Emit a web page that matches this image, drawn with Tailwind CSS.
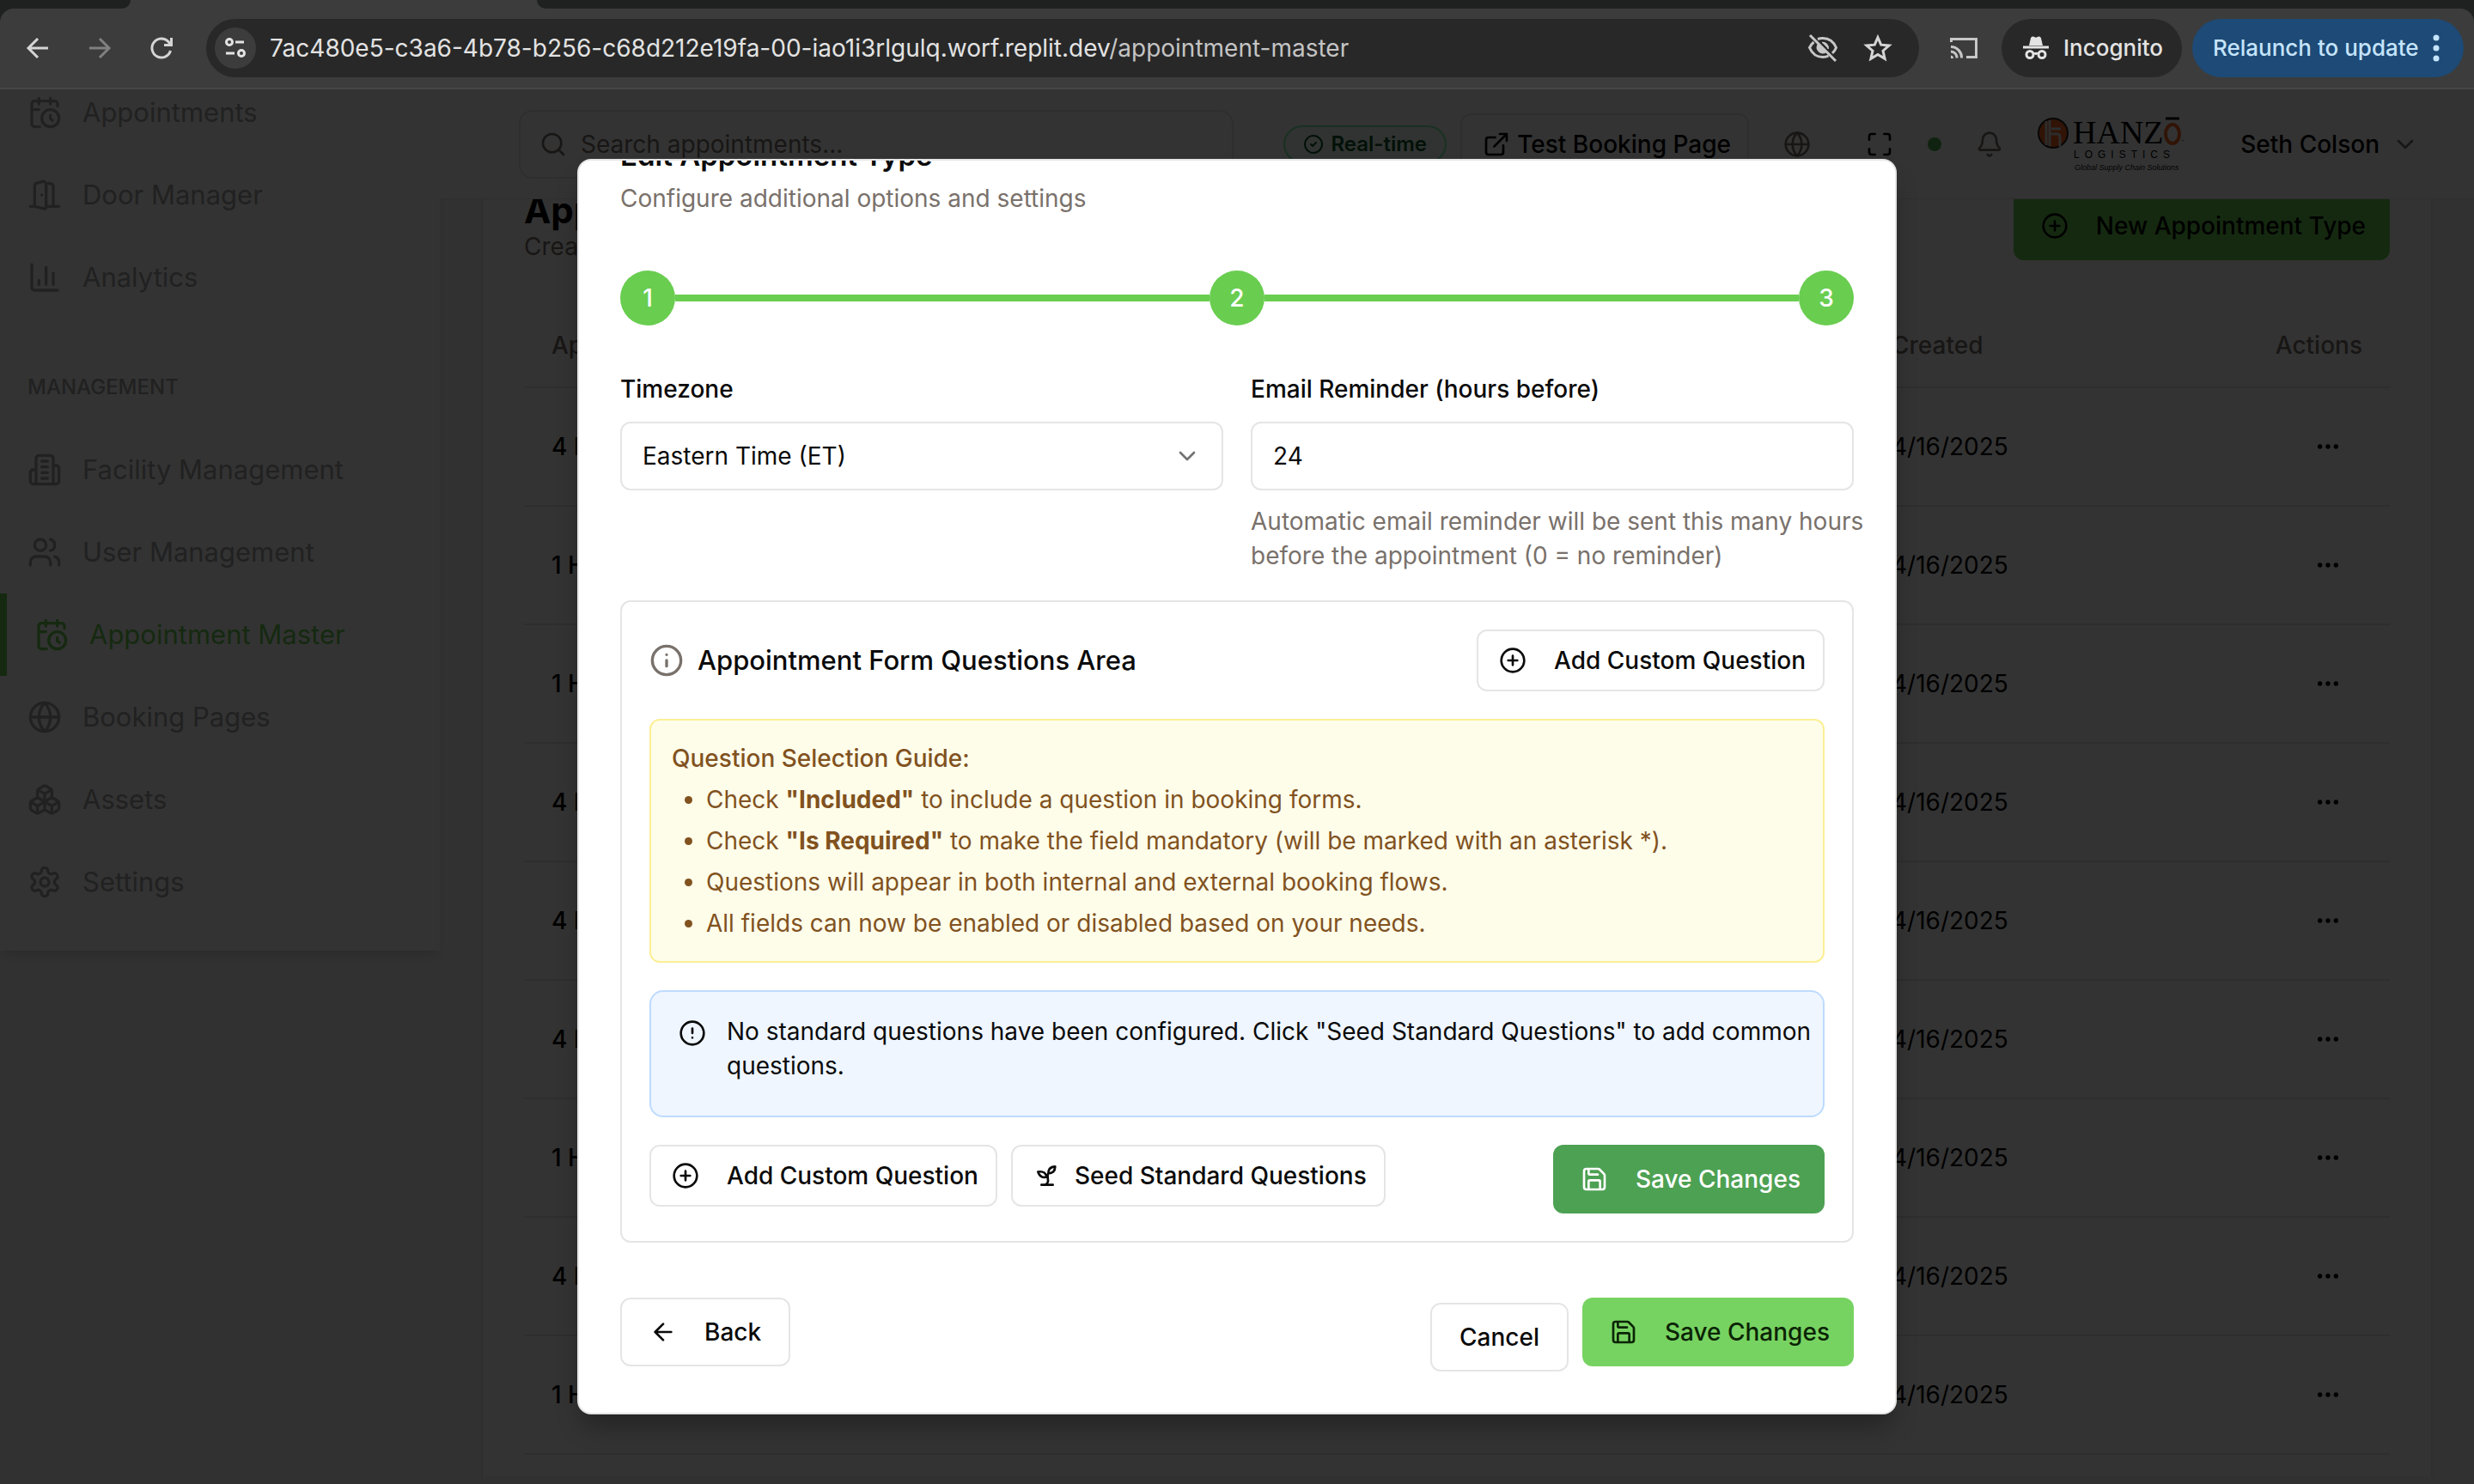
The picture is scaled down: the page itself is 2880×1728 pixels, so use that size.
<!DOCTYPE html>
<html lang="en">
<head>
<meta charset="utf-8">
<title>Appointment Master</title>
<script src="https://cdn.jsdelivr.net/npm/@tailwindcss/browser@4"></script>
</head>
<body class="flex h-screen flex-col overflow-hidden bg-[#1f2120] font-['Inter',sans-serif] text-[28px] leading-10 text-neutral-950">

<svg class="hidden" xmlns="http://www.w3.org/2000/svg">
  <symbol id="i-calclock" viewBox="0 0 24 24"><path d="M21 7.5V6a2 2 0 0 0-2-2H5a2 2 0 0 0-2 2v14a2 2 0 0 0 2 2h3.5M16 2v4M8 2v4M3 10h5M17.5 17.5 16 16.3V14"/><circle cx="16" cy="16" r="6"/></symbol>
  <symbol id="i-door" viewBox="0 0 24 24"><path d="M13 4h3a2 2 0 0 1 2 2v14M2 20h3M13 20h9M10 12v.01M13 4.562v16.157a1 1 0 0 1-1.242.97L5 20V5.562a2 2 0 0 1 1.515-1.94l4-1A2 2 0 0 1 13 4.561Z"/></symbol>
  <symbol id="i-chart" viewBox="0 0 24 24"><path d="M3 3v16a2 2 0 0 0 2 2h16M18 17V9M13 17V5M8 17v-3"/></symbol>
  <symbol id="i-building" viewBox="0 0 24 24"><path d="M6 22V4a2 2 0 0 1 2-2h8a2 2 0 0 1 2 2v18ZM6 12H4a2 2 0 0 0-2 2v6a2 2 0 0 0 2 2h2M18 9h2a2 2 0 0 1 2 2v9a2 2 0 0 1-2 2h-2M10 6h4M10 10h4M10 14h4M10 18h4"/></symbol>
  <symbol id="i-users" viewBox="0 0 24 24"><path d="M16 21v-2a4 4 0 0 0-4-4H6a4 4 0 0 0-4 4v2M22 21v-2a4 4 0 0 0-3-3.87M16 3.13a4 4 0 0 1 0 7.75"/><circle cx="9" cy="7" r="4"/></symbol>
  <symbol id="i-globe" viewBox="0 0 24 24"><circle cx="12" cy="12" r="10"/><path d="M12 2a14.5 14.5 0 0 0 0 20 14.5 14.5 0 0 0 0-20M2 12h20"/></symbol>
  <symbol id="i-boxes" viewBox="0 0 24 24"><path d="M2.97 12.92A2 2 0 0 0 2 14.63v3.24a2 2 0 0 0 .97 1.71l3 1.8a2 2 0 0 0 2.06 0L12 19v-5.5l-5-3-4.03 2.42ZM7 16.5l-4.74-2.85M7 16.5l5-3M7 16.5v5.17M12 13.5V19l3.97 2.38a2 2 0 0 0 2.06 0l3-1.8a2 2 0 0 0 .97-1.71v-3.24a2 2 0 0 0-.97-1.71L17 10.5l-5 3ZM17 16.5l-5-3M17 16.5l4.74-2.85M17 16.5v5.17M7.97 4.42A2 2 0 0 0 7 6.13v4.37l5 3 5-3V6.13a2 2 0 0 0-.97-1.71l-3-1.8a2 2 0 0 0-2.06 0l-3 1.8ZM12 8 7.26 5.15M12 8l4.74-2.85M12 13.5V8"/></symbol>
  <symbol id="i-gear" viewBox="0 0 24 24"><path d="M12.22 2h-.44a2 2 0 0 0-2 2v.18a2 2 0 0 1-1 1.73l-.43.25a2 2 0 0 1-2 0l-.15-.08a2 2 0 0 0-2.73.73l-.22.38a2 2 0 0 0 .73 2.73l.15.1a2 2 0 0 1 1 1.72v.51a2 2 0 0 1-1 1.74l-.15.09a2 2 0 0 0-.73 2.73l.22.38a2 2 0 0 0 2.73.73l.15-.08a2 2 0 0 1 2 0l.43.25a2 2 0 0 1 1 1.73V20a2 2 0 0 0 2 2h.44a2 2 0 0 0 2-2v-.18a2 2 0 0 1 1-1.73l.43-.25a2 2 0 0 1 2 0l.15.08a2 2 0 0 0 2.73-.73l.22-.39a2 2 0 0 0-.73-2.73l-.15-.08a2 2 0 0 1-1-1.74v-.5a2 2 0 0 1 1-1.74l.15-.09a2 2 0 0 0 .73-2.73l-.22-.38a2 2 0 0 0-2.73-.73l-.15.08a2 2 0 0 1-2 0l-.43-.25a2 2 0 0 1-1-1.73V4a2 2 0 0 0-2-2z"/><circle cx="12" cy="12" r="3"/></symbol>
  <symbol id="i-search" viewBox="0 0 24 24"><circle cx="11" cy="11" r="8"/><path d="m21 21-4.3-4.3"/></symbol>
  <symbol id="i-check" viewBox="0 0 24 24"><circle cx="12" cy="12" r="10"/><path d="m9 12 2 2 4-4"/></symbol>
  <symbol id="i-external" viewBox="0 0 24 24"><path d="M15 3h6v6M10 14 21 3M18 13v6a2 2 0 0 1-2 2H5a2 2 0 0 1-2-2V8a2 2 0 0 1 2-2h6"/></symbol>
  <symbol id="i-scan" viewBox="0 0 24 24"><path d="M8 3H5a2 2 0 0 0-2 2v3M21 8V5a2 2 0 0 0-2-2h-3M3 16v3a2 2 0 0 0 2 2h3M16 21h3a2 2 0 0 0 2-2v-3"/></symbol>
  <symbol id="i-bell" viewBox="0 0 24 24"><path d="M10.268 21a2 2 0 0 0 3.464 0M3.262 15.326A1 1 0 0 0 4 17h16a1 1 0 0 0 .74-1.673C19.41 13.956 18 12.499 18 8A6 6 0 0 0 6 8c0 4.499-1.411 5.956-2.738 7.326"/></symbol>
  <symbol id="i-down" viewBox="0 0 24 24"><path d="m6 9 6 6 6-6"/></symbol>
  <symbol id="i-plus" viewBox="0 0 24 24"><circle cx="12" cy="12" r="10"/><path d="M8 12h8M12 8v8"/></symbol>
  <symbol id="i-info" viewBox="0 0 24 24"><circle cx="12" cy="12" r="10"/><path d="M12 16v-4M12 8h.01"/></symbol>
  <symbol id="i-alert" viewBox="0 0 24 24"><circle cx="12" cy="12" r="10"/><path d="M12 8v4M12 16h.01"/></symbol>
  <symbol id="i-sprout" viewBox="0 0 24 24"><path d="M7 20h10M10 20c5.5-2.5.8-6.4 3-10M9.5 9.4c1.1.8 1.8 2.2 2.3 3.7-2 .4-3.5.4-4.8-.3-1.2-.6-2.3-1.9-3-4.2 2.8-.5 4.4 0 5.5.8zM14.1 6a7 7 0 0 0-1.1 4c1.9-.1 3.3-.6 4.3-1.4 1-1 1.6-2.3 1.7-4.6-2.7.1-4 1-4.9 2z"/></symbol>
  <symbol id="i-save" viewBox="0 0 24 24"><path d="M15.2 3a2 2 0 0 1 1.4.6l3.8 3.8a2 2 0 0 1 .6 1.4V19a2 2 0 0 1-2 2H5a2 2 0 0 1-2-2V5a2 2 0 0 1 2-2zM17 21v-7a1 1 0 0 0-1-1H8a1 1 0 0 0-1 1v7M7 3v4a1 1 0 0 0 1 1h7"/></symbol>
  <symbol id="i-left" viewBox="0 0 24 24"><path d="m12 19-7-7 7-7M19 12H5"/></symbol>
  <symbol id="i-dots" viewBox="0 0 24 24"><circle cx="12" cy="12" r="1"/><circle cx="19" cy="12" r="1"/><circle cx="5" cy="12" r="1"/></symbol>
</svg>

<!-- Browser chrome -->
<div class="flex h-[10px] shrink-0 bg-[#3c3c3c]">
  <div class="w-[152px] rounded-br-[10px] bg-[#1f2120]"></div>
  <div class="w-[473px]"></div>
  <div class="flex-1 rounded-bl-[10px] bg-[#1f2120]"></div>
</div>
<div class="flex h-[94px] shrink-0 items-center rounded-t-2xl border-b-2 border-[#474747] bg-[#3c3c3c] pr-3 pl-6 text-[#e3e3e3]">
  <button class="flex size-10 items-center justify-center" aria-label="Back"><svg class="size-8" viewBox="0 0 32 32" fill="none" stroke="#d5d5d5" stroke-width="3"><path d="M28 16H6M16 5 5 16l11 11"/></svg></button>
  <button class="ml-8 flex size-10 items-center justify-center" aria-label="Forward"><svg class="size-8" viewBox="0 0 32 32" fill="none" stroke="#808080" stroke-width="3"><path d="M4 16h22M16 5l11 11-11 11"/></svg></button>
  <button class="ml-8 flex size-10 items-center justify-center" aria-label="Reload"><svg class="size-8" viewBox="0 0 32 32" fill="none" stroke="#d5d5d5" stroke-width="3"><path d="M26.500 19A11 11 0 1 1 24 8.500l2 2.500M27.500 4v8.500H19"/></svg></button>
  <div class="ml-8 flex h-[68px] flex-1 items-center rounded-full bg-[#282828] pr-7 pl-[10px]">
    <button class="flex size-12 items-center justify-center rounded-full bg-[#3c3c3c]" aria-label="Site settings"><svg class="size-8" viewBox="0 0 32 32" fill="none" stroke="#e3e3e3" stroke-width="3"><circle cx="9" cy="9" r="3.500"/><path d="M16 9h10M5 22h10"/><circle cx="23" cy="22" r="3.500"/></svg></button>
    <p class="ml-4 flex-1 whitespace-nowrap">7ac480e5-c3a6-4b78-b256-c68d212e19fa-00-iao1i3rlgulq.worf.replit.dev<span class="text-[#c4c4c4]">/appointment-master</span></p>
    <button class="mr-6 flex size-10 items-center justify-center" aria-label="Tracking blocked"><svg class="size-10" viewBox="0 0 40 40" fill="none" stroke="#c7c7c7" stroke-width="3"><path d="M5 5l30 30M14 9.500a17 17 0 0 1 6-1c7 0 12.500 4 15.500 11a18 18 0 0 1-4.500 6.500M9.500 13a19 19 0 0 0-5 6.500c3 7 8.500 11 15.500 11 2.500 0 4.500-.4 6.500-1.300"/><path d="M14.500 15.500a6.500 6.500 0 0 0 9 9zM19 13.500a6.500 6.500 0 0 1 7.200 7.500" fill="#c7c7c7" stroke-width="1.500"/></svg></button>
    <button class="flex size-10 items-center justify-center" aria-label="Bookmark"><svg class="size-9" viewBox="0 0 36 36" fill="none" stroke="#d5d5d5" stroke-width="3"><path d="m18 5.500 3.700 8.700 9.400.8-7.100 6.200 2.100 9.200-8.100-4.900-8.100 4.900 2.100-9.200L4.900 15l9.400-.8z"/></svg></button>
  </div>
  <button class="mr-6 ml-8 flex size-10 items-center justify-center" aria-label="Cast"><svg class="size-9" viewBox="0 0 36 36" fill="none" stroke="#c7c7c7" stroke-width="3"><path d="M3.500 11V7.500h29v21H21M3 16.500A12.500 12.500 0 0 1 15.500 29.500M3 22a7 7 0 0 1 7 7.500"/><path d="M3 26.500 A3.500 3.500 0 0 1 6 30H3z" fill="#c7c7c7" stroke="none"/></svg></button>
  <button class="flex h-[68px] w-[210px] items-center gap-4 rounded-full bg-[#282828] pl-6 text-[26px] font-medium"><svg class="size-8" viewBox="0 0 32 32" fill="#e3e3e3"><path d="M8 13 10 4.500c.5-2 2.200-2.500 3.500-1.800l2.500 1 2.500-1c1.300-.7 3-.2 3.500 1.800L24 13zM1 13.500h30v3H1z"/><path fill="none" stroke="#e3e3e3" stroke-width="3" d="M14 23c1-1 3-1 4 0"/><circle cx="9" cy="23.500" r="4" fill="none" stroke="#e3e3e3" stroke-width="3"/><circle cx="23" cy="23.500" r="4" fill="none" stroke="#e3e3e3" stroke-width="3"/></svg>Incognito</button>
  <button class="ml-3 flex h-[68px] w-[316px] items-center justify-between rounded-full bg-[#1d4a76] pr-7 pl-6 text-[26px] font-medium whitespace-nowrap text-[#c5e4fb]">Relaunch to update<svg class="h-8 w-2" viewBox="0 0 8 32" fill="#c5e4fb"><circle cx="4" cy="4" r="3.500"/><circle cx="4" cy="16" r="3.500"/><circle cx="4" cy="28" r="3.500"/></svg></button>
</div>

<!-- Page -->
<div class="relative flex min-h-0 flex-1 items-start overflow-hidden bg-neutral-100">
  <nav class="-mt-[21px] w-[512px] shrink-0 bg-white pb-8 text-[31px] text-[#a3a3a3] shadow-lg">
    <a href="#" class="flex h-24 items-center gap-6 px-8"><svg class="size-10 fill-none stroke-current stroke-2" stroke-linecap="round" stroke-linejoin="round"><use href="#i-calclock"/></svg>Appointments</a>
    <a href="#" class="flex h-24 items-center gap-6 px-8"><svg class="size-10 fill-none stroke-current stroke-2" stroke-linecap="round" stroke-linejoin="round"><use href="#i-door"/></svg>Door Manager</a>
    <a href="#" class="flex h-24 items-center gap-6 px-8"><svg class="size-10 fill-none stroke-current stroke-2" stroke-linecap="round" stroke-linejoin="round"><use href="#i-chart"/></svg>Analytics</a>
    <h2 class="px-8 pt-16 pb-8 text-2xl font-medium">MANAGEMENT</h2>
    <a href="#" class="flex h-24 items-center gap-6 px-8"><svg class="size-10 fill-none stroke-current stroke-2" stroke-linecap="round" stroke-linejoin="round"><use href="#i-building"/></svg>Facility Management</a>
    <a href="#" class="flex h-24 items-center gap-6 px-8"><svg class="size-10 fill-none stroke-current stroke-2" stroke-linecap="round" stroke-linejoin="round"><use href="#i-users"/></svg>User Management</a>
    <a href="#" class="flex h-24 items-center gap-6 border-l-8 border-[#69cd50] px-8 text-[#69cd50]"><svg class="size-10 fill-none stroke-current stroke-2" stroke-linecap="round" stroke-linejoin="round"><use href="#i-calclock"/></svg>Appointment Master</a>
    <a href="#" class="flex h-24 items-center gap-6 px-8"><svg class="size-10 fill-none stroke-current stroke-2" stroke-linecap="round" stroke-linejoin="round"><use href="#i-globe"/></svg>Booking Pages</a>
    <a href="#" class="flex h-24 items-center gap-6 px-8"><svg class="size-10 fill-none stroke-current stroke-2" stroke-linecap="round" stroke-linejoin="round"><use href="#i-boxes"/></svg>Assets</a>
    <a href="#" class="flex h-24 items-center gap-6 px-8"><svg class="size-10 fill-none stroke-current stroke-2" stroke-linecap="round" stroke-linejoin="round"><use href="#i-gear"/></svg>Settings</a>
  </nav>

  <div class="flex h-full min-w-0 flex-1 flex-col">
    <header class="flex h-32 shrink-0 items-center border-b border-neutral-200 bg-white pr-16 pl-[92px]">
      <label class="flex h-20 flex-1 items-center gap-4 rounded-2xl border-2 border-neutral-200 pr-6 pl-[22px] text-stone-500">
        <svg class="size-8 shrink-0 fill-none stroke-current stroke-2" stroke-linecap="round" stroke-linejoin="round"><use href="#i-search"/></svg>
        <input type="text" class="w-full bg-transparent outline-none placeholder:text-stone-500" placeholder="Search appointments..." aria-label="Search appointments">
      </label>
      <span class="ml-[58px] flex h-11 w-[190px] items-center justify-center gap-2 rounded-full border-2 border-green-300 bg-green-50 text-2xl font-semibold text-green-900"><svg class="size-6 fill-none stroke-current stroke-2" stroke-linecap="round" stroke-linejoin="round"><use href="#i-check"/></svg>Real-time</span>
      <button class="ml-4 flex h-[72px] w-[336px] items-center gap-2 rounded-xl border-2 border-neutral-200 px-6 font-medium whitespace-nowrap text-black"><svg class="size-8 shrink-0 fill-none stroke-current stroke-2" stroke-linecap="round" stroke-linejoin="round"><use href="#i-external"/></svg>Test Booking Page</button>
      <button class="ml-10 text-stone-500" aria-label="Language"><svg class="size-8 fill-none stroke-current stroke-2" stroke-linecap="round" stroke-linejoin="round"><use href="#i-globe"/></svg></button>
      <button class="ml-16 text-black" aria-label="Full screen"><svg class="size-8 fill-none stroke-current stroke-2" stroke-linecap="round" stroke-linejoin="round"><use href="#i-scan"/></svg></button>
      <span class="ml-10 size-4 rounded-full bg-[#4caf50]"></span>
      <button class="ml-10 text-stone-500" aria-label="Notifications"><svg class="size-8 fill-none stroke-current stroke-2" stroke-linecap="round" stroke-linejoin="round"><use href="#i-bell"/></svg></button>
      <svg class="ml-10 h-20 w-[172px]" viewBox="0 0 172 80" role="img" aria-label="Hanzo Logistics">
        <circle cx="18" cy="27" r="17" fill="#f26522" stroke="#222" stroke-width="2"/>
        <path d="M10 13v28M14 12v30" stroke="#ddd" stroke-width="3"/><path d="M16 22h11M14 28h9q3 0 3 4v11" fill="none" stroke="#ddd" stroke-width="3"/>
        <text x="41" y="39" font-family="Liberation Serif" font-size="38" fill="#000">HANZ</text>
        <ellipse cx="157" cy="28" rx="8" ry="11" fill="none" stroke="#f26522" stroke-width="4"/>
        <path d="M149 10h16" stroke="#000" stroke-width="3"/>
        <text x="167" y="39" font-family="Inter" font-size="5">™</text>
        <text x="42" y="56" font-family="Liberation Sans" font-size="12" letter-spacing="6" fill="#000">LOGISTICS</text>
        <text x="43" y="70" font-family="Liberation Sans" font-style="italic" font-size="9" fill="#111">Global Supply Chain Solutions</text>
      </svg>
      <button class="ml-16 flex items-center gap-3.5 font-medium whitespace-nowrap text-black">Seth Colson<svg class="size-8 fill-none stroke-neutral-500 stroke-2" stroke-linecap="round" stroke-linejoin="round"><use href="#i-down"/></svg></button>
    </header>

    <main class="min-h-0 flex-1 overflow-hidden px-12">
      <div class="h-full border-x-2 border-neutral-200 bg-white px-12">
        <div class="-mt-[9px] flex h-[83px] items-start justify-between">
          <div>
            <h1 class="text-[42px] leading-[44px] font-bold text-black">Appointment Types</h1>
            <p class="text-stone-500">Create and manage appointment types</p>
          </div>
          <button class="flex h-20 items-center gap-8 rounded-xl bg-[#69cd50] pr-7 pl-8 font-medium text-black"><svg class="size-8 fill-none stroke-current stroke-2" stroke-linecap="round" stroke-linejoin="round"><use href="#i-plus"/></svg>New Appointment Type</button>
        </div>
        <table class="mt-12 w-full border-separate border-spacing-0 text-left text-black">
          <thead><tr class="text-stone-500">
            <th class="h-[98px] border-b-2 border-neutral-200 pl-8 font-medium">Appointment Type</th>
            <th class="w-[292px] border-b-2 border-neutral-200 pl-8 font-medium">Created</th>
            <th class="w-[320px] border-b-2 border-neutral-200 pr-8 text-right font-medium">Actions</th>
          </tr></thead>
          <tbody>
            <tr><td class="h-[138px] border-b-2 border-neutral-200 pl-8 font-medium">4 Hour</td><td class="border-b-2 border-neutral-200 pl-8">4/16/2025</td><td class="border-b-2 border-neutral-200 pr-8"><button class="ml-auto flex size-20 items-center justify-center" aria-label="Row actions"><svg class="size-8 fill-none stroke-current stroke-2"><use href="#i-dots"/></svg></button></td></tr>
            <tr><td class="h-[138px] border-b-2 border-neutral-200 pl-8 font-medium">1 Hour</td><td class="border-b-2 border-neutral-200 pl-8">4/16/2025</td><td class="border-b-2 border-neutral-200 pr-8"><button class="ml-auto flex size-20 items-center justify-center" aria-label="Row actions"><svg class="size-8 fill-none stroke-current stroke-2"><use href="#i-dots"/></svg></button></td></tr>
            <tr><td class="h-[138px] border-b-2 border-neutral-200 pl-8 font-medium">1 Hour</td><td class="border-b-2 border-neutral-200 pl-8">4/16/2025</td><td class="border-b-2 border-neutral-200 pr-8"><button class="ml-auto flex size-20 items-center justify-center" aria-label="Row actions"><svg class="size-8 fill-none stroke-current stroke-2"><use href="#i-dots"/></svg></button></td></tr>
            <tr><td class="h-[138px] border-b-2 border-neutral-200 pl-8 font-medium">4 Hour</td><td class="border-b-2 border-neutral-200 pl-8">4/16/2025</td><td class="border-b-2 border-neutral-200 pr-8"><button class="ml-auto flex size-20 items-center justify-center" aria-label="Row actions"><svg class="size-8 fill-none stroke-current stroke-2"><use href="#i-dots"/></svg></button></td></tr>
            <tr><td class="h-[138px] border-b-2 border-neutral-200 pl-8 font-medium">4 Hour</td><td class="border-b-2 border-neutral-200 pl-8">4/16/2025</td><td class="border-b-2 border-neutral-200 pr-8"><button class="ml-auto flex size-20 items-center justify-center" aria-label="Row actions"><svg class="size-8 fill-none stroke-current stroke-2"><use href="#i-dots"/></svg></button></td></tr>
            <tr><td class="h-[138px] border-b-2 border-neutral-200 pl-8 font-medium">4 Hour</td><td class="border-b-2 border-neutral-200 pl-8">4/16/2025</td><td class="border-b-2 border-neutral-200 pr-8"><button class="ml-auto flex size-20 items-center justify-center" aria-label="Row actions"><svg class="size-8 fill-none stroke-current stroke-2"><use href="#i-dots"/></svg></button></td></tr>
            <tr><td class="h-[138px] border-b-2 border-neutral-200 pl-8 font-medium">1 Hour</td><td class="border-b-2 border-neutral-200 pl-8">4/16/2025</td><td class="border-b-2 border-neutral-200 pr-8"><button class="ml-auto flex size-20 items-center justify-center" aria-label="Row actions"><svg class="size-8 fill-none stroke-current stroke-2"><use href="#i-dots"/></svg></button></td></tr>
            <tr><td class="h-[138px] border-b-2 border-neutral-200 pl-8 font-medium">4 Hour</td><td class="border-b-2 border-neutral-200 pl-8">4/16/2025</td><td class="border-b-2 border-neutral-200 pr-8"><button class="ml-auto flex size-20 items-center justify-center" aria-label="Row actions"><svg class="size-8 fill-none stroke-current stroke-2"><use href="#i-dots"/></svg></button></td></tr>
            <tr><td class="h-[138px] border-b-2 border-neutral-200 pl-8 font-medium">1 Hour</td><td class="border-b-2 border-neutral-200 pl-8">4/16/2025</td><td class="border-b-2 border-neutral-200 pr-8"><button class="ml-auto flex size-20 items-center justify-center" aria-label="Row actions"><svg class="size-8 fill-none stroke-current stroke-2"><use href="#i-dots"/></svg></button></td></tr>
          </tbody>
        </table>
      </div>
    </main>
  </div>

  <!-- Dialog, scrolled to its end -->
  <div class="absolute inset-0 flex items-center justify-center bg-black/80">
    <div role="dialog" aria-labelledby="dlg-title" class="flex h-9/10 w-full max-w-[1536px] flex-col justify-end overflow-hidden rounded-2xl border-2 border-neutral-200 bg-white px-12 pb-12 shadow-[0_20px_30px_-6px_rgb(0_0_0/0.3)]">
      <h2 id="dlg-title" class="text-[33px] leading-9 font-semibold">Edit Appointment Type</h2>
      <p class="mt-3 text-stone-500">Configure additional options and settings</p>

      <ol class="mt-16 flex items-center font-medium text-white">
        <li class="flex size-16 items-center justify-center rounded-full bg-[#69cd50]">1</li>
        <li class="h-2 flex-1 bg-[#69cd50]" aria-hidden="true"></li>
        <li class="flex size-16 items-center justify-center rounded-full bg-[#69cd50]">2</li>
        <li class="h-2 flex-1 bg-[#69cd50]" aria-hidden="true"></li>
        <li class="flex size-16 items-center justify-center rounded-full bg-[#69cd50]">3</li>
      </ol>

      <div class="mt-[60px] grid grid-cols-2 gap-8">
        <div>
          <label for="tz" class="mb-6 block leading-7 font-medium">Timezone</label>
          <div class="relative">
            <select id="tz" class="h-20 w-full appearance-none rounded-xl border-2 border-neutral-200 bg-white px-6"><option>Eastern Time (ET)</option></select>
            <svg class="pointer-events-none absolute top-6 right-[26px] size-8 fill-none stroke-neutral-500 stroke-2" stroke-linecap="round" stroke-linejoin="round"><use href="#i-down"/></svg>
          </div>
        </div>
        <div>
          <label for="rem" class="mb-6 block leading-7 font-medium">Email Reminder (hours before)</label>
          <input id="rem" type="text" inputmode="numeric" value="24" class="h-20 w-full rounded-xl border-2 border-neutral-200 px-6">
          <p class="mt-4 whitespace-nowrap text-stone-500">Automatic email reminder will be sent this many hours<br>before the appointment (0 = no reminder)</p>
        </div>
      </div>

      <section class="mt-8 rounded-xl border-2 border-neutral-200 p-8">
        <div class="flex items-center justify-between">
          <h3 class="flex items-center gap-4 text-[31px] font-medium"><svg class="size-10 fill-none stroke-stone-500 stroke-2" stroke-linecap="round" stroke-linejoin="round"><use href="#i-info"/></svg>Appointment Form Questions Area</h3>
          <button class="flex h-[72px] items-center gap-8 rounded-xl border-2 border-neutral-200 pr-5 pl-6 font-medium"><svg class="size-8 fill-none stroke-current stroke-2" stroke-linecap="round" stroke-linejoin="round"><use href="#i-plus"/></svg>Add Custom Question</button>
        </div>
        <div class="mt-8 rounded-xl border-2 border-[#fbef94] bg-[#fefdea] p-6 text-[#81521f]">
          <p class="font-medium">Question Selection Guide:</p>
          <ul class="mt-2 list-disc space-y-2 pl-10">
            <li>Check <strong>"Included"</strong> to include a question in booking forms.</li>
            <li>Check <strong>"Is Required"</strong> to make the field mandatory (will be marked with an asterisk *).</li>
            <li>Questions will appear in both internal and external booking flows.</li>
            <li>All fields can now be enabled or disabled based on your needs.</li>
          </ul>
        </div>
        <div role="alert" class="mt-8 flex items-start gap-6 rounded-2xl border-2 border-blue-200 bg-[#eff6ff] pt-[26px] pb-[38px] pl-8">
          <svg class="mt-1.5 size-8 shrink-0 fill-none stroke-current stroke-2" stroke-linecap="round" stroke-linejoin="round"><use href="#i-alert"/></svg>
          <p class="whitespace-nowrap">No standard questions have been configured. Click "Seed Standard Questions" to add common<br>questions.</p>
        </div>
        <div class="mt-8 flex items-start gap-4 font-medium">
          <button class="flex h-[72px] items-center gap-8 rounded-xl border-2 border-neutral-200 pr-5 pl-6"><svg class="size-8 fill-none stroke-current stroke-2" stroke-linecap="round" stroke-linejoin="round"><use href="#i-plus"/></svg>Add Custom Question</button>
          <button class="flex h-[72px] items-center gap-4 rounded-xl border-2 border-neutral-200 pr-5 pl-6"><svg class="size-8 fill-none stroke-current stroke-2" stroke-linecap="round" stroke-linejoin="round"><use href="#i-sprout"/></svg>Seed Standard Questions</button>
          <button class="ml-auto flex h-20 items-center gap-8 rounded-xl bg-[#4da153] pr-7 pl-8 text-white"><svg class="size-8 fill-none stroke-current stroke-2" stroke-linecap="round" stroke-linejoin="round"><use href="#i-save"/></svg>Save Changes</button>
        </div>
      </section>

      <div class="mt-16 flex items-start gap-4 font-medium">
        <button class="flex h-20 items-center gap-8 rounded-xl border-2 border-neutral-200 px-8"><svg class="size-8 fill-none stroke-current stroke-2" stroke-linecap="round" stroke-linejoin="round"><use href="#i-left"/></svg>Back</button>
        <button class="mt-1.5 ml-auto h-20 rounded-xl border-2 border-neutral-200 px-8">Cancel</button>
        <button class="flex h-20 items-center gap-8 rounded-xl bg-[#77d361] pr-7 pl-8 text-[#0b2405]"><svg class="size-8 fill-none stroke-current stroke-2" stroke-linecap="round" stroke-linejoin="round"><use href="#i-save"/></svg>Save Changes</button>
      </div>
    </div>
  </div>
</div>
</body>
</html>
